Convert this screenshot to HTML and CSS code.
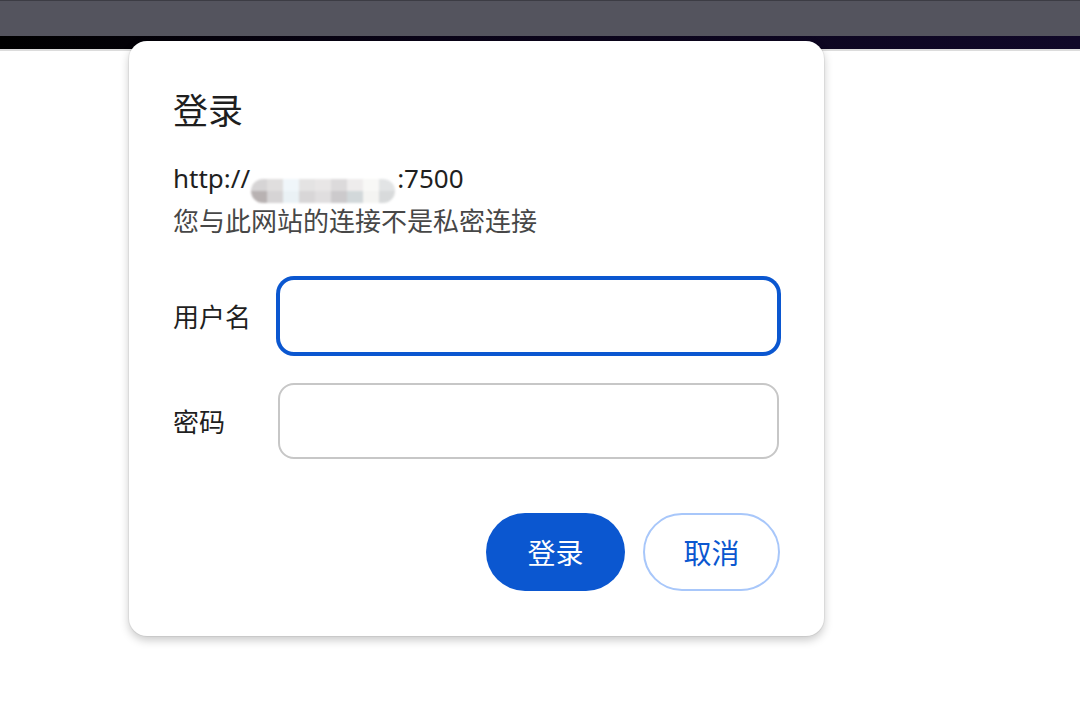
FILE: index.html
```html
<!DOCTYPE html>
<html lang="zh-CN">
<head>
  <meta charset="UTF-8">
  <meta name="viewport" content="width=device-width, initial-scale=1.0">
  <title>登录</title>
  <link rel="stylesheet" href="styles.css">
</head>
<body>
  <div class="toolbar"></div>
  <div class="strip"></div>
  <div class="page"></div>

  <form class="dialog" id="login-dialog">
    <h1 class="dialog-title">登录</h1>
    <div class="origin">http://<span class="masked" aria-hidden="true"><i></i><i></i><i></i><i></i><i></i><i></i><i></i><i></i><i></i><i></i><i></i><i></i><i></i><i></i><i></i><i></i><i></i><i></i></span>:7500</div>
    <div class="notice">您与此网站的连接不是私密连接</div>

    <div class="fields">
      <div class="field">
        <label for="username">用户名</label>
        <input type="text" id="username" class="focused" autocomplete="off">
      </div>
      <div class="field">
        <label for="password">密码</label>
        <input type="password" id="password">
      </div>
    </div>

    <div class="actions">
      <button type="submit" class="btn btn-primary">登录</button>
      <button type="button" class="btn btn-outline">取消</button>
    </div>
  </form>
</body>
</html>
```

FILE: styles.css
```css
body {
  margin: 0;
  background-color: #fff;
  font-family: "Noto Sans", "Noto Sans CJK SC", sans-serif;
  color: #1f1f1f;
}
.toolbar {
  height: 35px;
  background-color: #54545e;
  border-top: 1px solid #3c3c44;
}
.strip {
  height: 13px;
  background: linear-gradient(to right, #000 0%, #0a0418 40%, #100828 100%);
}
.page {
  height: 2px;
  background-color: #dcdcdc;
}
.dialog {
  position: absolute;
  left: 129px;
  top: 41px;
  width: 695px;
  box-sizing: border-box;
  padding: 50px 44px 45px 44px;
  background-color: #fff;
  border-radius: 18px;
  box-shadow: 0 0 0 1px rgba(0, 0, 0, 0.05), 0 4px 10px rgba(0, 0, 0, 0.22);
}
.dialog-title {
  margin: 0 0 26px 0;
  font-size: 35px;
  font-weight: normal;
  line-height: 40px;
  color: #1f1f1f;
}
.origin {
  height: 43px;
  font-size: 26px;
  line-height: 43px;
  color: #1f1f1f;
  white-space: nowrap;
}
.masked {
  display: inline-grid;
  grid-template-columns: repeat(9, 16px);
  grid-template-rows: 12px 12px;
  width: 144px;
  margin: 0 2px 0 1px;
  vertical-align: -3px;
  border-radius: 12px;
  overflow: hidden;
  filter: blur(1.2px);
}
.masked i:nth-child(1) { background: #d6d4d5; }
.masked i:nth-child(2) { background: #e0dede; }
.masked i:nth-child(3) { background: #f0f6fa; }
.masked i:nth-child(4) { background: #e4e3e3; }
.masked i:nth-child(5) { background: #e8e6e6; }
.masked i:nth-child(6) { background: #dcdadb; }
.masked i:nth-child(7) { background: #eeecec; }
.masked i:nth-child(8) { background: #f8f8f6; }
.masked i:nth-child(9) { background: #e2e4e5; }
.masked i:nth-child(10) { background: #b8b2b2; }
.masked i:nth-child(11) { background: #d6d4d5; }
.masked i:nth-child(12) { background: #eaf1f5; }
.masked i:nth-child(13) { background: #d8d6d7; }
.masked i:nth-child(14) { background: #e0dedf; }
.masked i:nth-child(15) { background: #cccacc; }
.masked i:nth-child(16) { background: #d2d8da; }
.masked i:nth-child(17) { background: #f4f4f2; }
.masked i:nth-child(18) { background: #d8dadb; }
.notice {
  font-size: 26px;
  line-height: 43px;
  color: #474747;
}
.fields {
  display: flex;
  flex-direction: column;
  gap: 29px;
  margin-top: 35px;
}
.field {
  display: flex;
  align-items: center;
}
.field label {
  width: 105px;
  flex-shrink: 0;
  font-size: 26px;
  color: #1f1f1f;
}
.field input {
  width: 501px;
  height: 76px;
  box-sizing: border-box;
  padding: 0 20px;
  border: 2px solid #c7c7c7;
  border-radius: 16px;
  font-size: 26px;
  font-family: inherit;
  outline: none;
}
.field input.focused,
.field input:focus {
  border-color: #0b57d0;
  box-shadow: 0 0 0 2px #0b57d0;
}
.actions {
  display: flex;
  justify-content: flex-end;
  gap: 18px;
  margin-top: 54px;
}
.btn {
  height: 78px;
  box-sizing: border-box;
  border-radius: 39px;
  font-size: 28px;
  font-family: inherit;
  cursor: pointer;
}
.btn-primary {
  width: 139px;
  background-color: #0b57d0;
  color: #fff;
  border: none;
}
.btn-outline {
  width: 137px;
  background-color: #fff;
  color: #0b57d0;
  border: 2px solid #a8c7fa;
}
```
